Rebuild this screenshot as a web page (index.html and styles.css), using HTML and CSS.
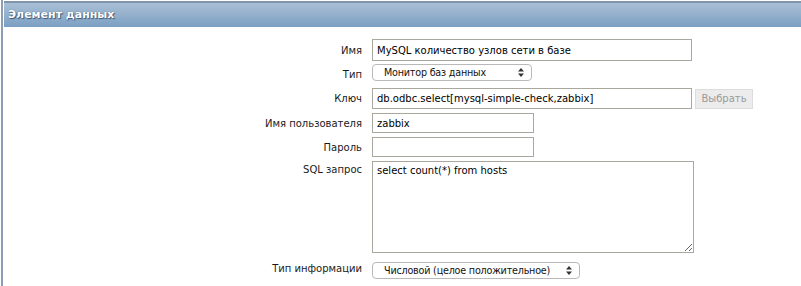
FILE: index.html
```html
<!DOCTYPE html>
<html lang="ru">
<head>
  <meta charset="UTF-8" />
  <title>Элемент данных</title>
  <link rel="stylesheet" href="styles.css">
</head>
<body>
  <div class="page">
    <div class="form-header">Элемент данных</div>

    <div class="form-grid">
      <label class="form-label">Имя</label>
      <div class="form-field">
        <input type="text" class="text-input wide name-input" value="MySQL количество узлов сети в базе">
      </div>

      <label class="form-label">Тип</label>
      <div class="form-field">
        <div class="fake-select type-select">
          <span>Монитор баз данных</span>
          <svg class="arrows" width="6" height="9" viewBox="0 0 6 9"><path d="M0 3.5 L3 0 L6 3.5 Z M0 5.5 L3 9 L6 5.5 Z" fill="#333"/></svg>
        </div>
      </div>

      <label class="form-label">Ключ</label>
      <div class="form-field">
        <input type="text" class="text-input wide" value="db.odbc.select[mysql-simple-check,zabbix]">
        <button class="select-btn" disabled>Выбрать</button>
      </div>

      <label class="form-label">Имя пользователя</label>
      <div class="form-field">
        <input type="text" class="text-input short" value="zabbix">
      </div>

      <label class="form-label">Пароль</label>
      <div class="form-field">
        <input type="password" class="text-input short" value="">
      </div>

      <label class="form-label top">SQL запрос</label>
      <div class="form-field">
        <textarea class="sql-area">select count(*) from hosts</textarea>
      </div>

      <label class="form-label">Тип информации</label>
      <div class="form-field">
        <div class="fake-select info-select">
          <span>Числовой (целое положительное)</span>
          <svg class="arrows" width="6" height="9" viewBox="0 0 6 9"><path d="M0 3.5 L3 0 L6 3.5 Z M0 5.5 L3 9 L6 5.5 Z" fill="#333"/></svg>
        </div>
      </div>
    </div>
  </div>
</body>
</html>
```

FILE: styles.css
```css
body {
  margin: 0;
  font-family: "DejaVu Sans", Verdana, sans-serif;
  font-size: 10px;
  color: #1f1f1f;
  background: #fff;
}

.page {
  margin-left: 1px;
  border-left: 2px solid #8c9db3;
  padding: 1px 0 0 1px;
  min-height: 285px;
}

.form-header {
  height: 24px;
  line-height: 24px;
  border-top: 2px solid #7f93ad;
  background: linear-gradient(to bottom, #a9bfd6 0%, #96b1cd 45%, #7a9fc3 100%);
  padding-left: 4px;
  color: #fff;
  font-weight: bold;
  font-size: 11px;
  text-shadow: 1px 1px 1px #3d5674, 0 0 1px #3d5674;
}

.form-grid {
  display: grid;
  grid-template-columns: 358px 1fr;
  column-gap: 10px;
  row-gap: 4px;
  align-items: center;
  margin-top: 12px;
}

.form-label {
  text-align: right;
  white-space: nowrap;
  color: #1a1a1a;
}

.form-label.top {
  align-self: start;
  padding-top: 3px;
}

.form-field {
  display: flex;
  align-items: center;
  gap: 3px;
}

.text-input {
  box-sizing: border-box;
  height: 20px;
  border: 1px solid #aaa89d;
  padding: 0 4px;
  font-family: inherit;
  font-size: 10px;
  color: #000;
  outline: none;
}

.text-input.wide {
  width: 320px;
  height: 21px;
}

.text-input.name-input {
  height: 22px;
}

.text-input.short {
  width: 162px;
}

.select-btn {
  box-sizing: border-box;
  width: 58px;
  height: 20px;
  background: #ececec;
  border: 1px solid #dcdcdc;
  color: #9a9a9a;
  font-family: inherit;
  font-size: 10px;
  padding: 0;
}

.fake-select {
  box-sizing: border-box;
  height: 17px;
  border: 1px solid #b9b9b9;
  border-radius: 4px;
  display: flex;
  align-items: center;
  justify-content: space-between;
  padding: 0 7px 0 11px;
  color: #111;
  background: #fff;
  white-space: nowrap;
  font-size: 9.6px;
  letter-spacing: -0.2px;
}

.type-select {
  width: 160px;
  margin: -1px 0 3px;
}

.info-select {
  width: 208px;
  margin-top: 5px;
}

.sql-area {
  box-sizing: border-box;
  width: 322px;
  height: 92px;
  border: 1px solid #aaa89d;
  padding: 3px 4px;
  font-family: inherit;
  font-size: 10px;
  color: #000;
  resize: both;
  outline: none;
}
```
